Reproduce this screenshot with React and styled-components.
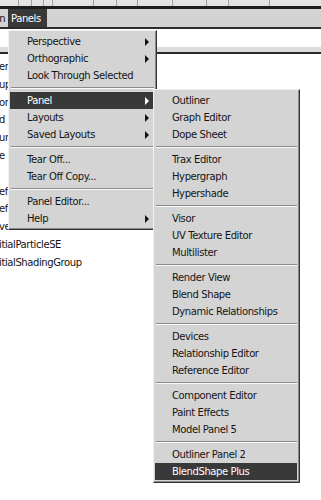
import React from 'react'
import styled, { createGlobalStyle } from 'styled-components'

const GlobalStyle = createGlobalStyle`
  html, body {
    margin: 0;
    padding: 0;
    background: #ffffff;
  }
  body {
    width: 321px;
    height: 500px;
    overflow: hidden;
    font-family: "DejaVu Sans", Verdana, sans-serif;
  }
`

const Screen = styled.div`
  position: relative;
  width: 321px;
  height: 500px;
  overflow: hidden;
  background: #ffffff;
  font-size: 10px;
  letter-spacing: -0.4px;
  color: #141414;
`

const TabStrip = styled.div`
  display: flex;
  height: 6px;
  background: #e4e4e4;
  border-bottom: 3px solid #1e1e1e;
`

const TabCell = styled.div`
  flex: 0 0 ${p => p.w}px;
  border-right: 1px solid #a0a0a0;
`

const MenuBar = styled.div`
  display: flex;
  height: 18px;
  background: #d3d3d3;
  border-bottom: 2px solid #2c2c2c;
`

const BarItem = styled.div`
  display: flex;
  align-items: center;
  justify-content: ${p => (p.clipped ? 'flex-end' : 'flex-start')};
  width: ${p => p.w}px;
  overflow: hidden;
  padding: 0 0 0 ${p => (p.clipped ? 0 : 3)}px;
  box-sizing: border-box;
  white-space: nowrap;
  background: ${p => (p.active ? '#393939' : 'transparent')};
  color: ${p => (p.active ? '#ffffff' : '#141414')};
`

const Outliner = styled.div`
  display: flex;
  flex-direction: column;
`

const HeaderRow = styled.div`
  height: 18px;
  background: #ffffff;
`

const HeaderBand = styled.div`
  height: 5px;
  background: #dcdcdc;
  border-bottom: 2px solid #2a2a2a;
`

const List = styled.div`
  display: flex;
  flex-direction: column;
  padding-top: 4px;
  margin-left: -1px;
`

const ListRow = styled.div`
  height: 17.8px;
  line-height: 17.8px;
  white-space: nowrap;
`

const Menu = styled.div`
  position: absolute;
  left: ${p => p.x}px;
  top: ${p => p.y}px;
  width: ${p => p.w}px;
  box-sizing: border-box;
  padding: 2px 2px 2px 1px;
  background: #d4d4d4;
  border: 1px solid;
  border-color: #f2f2f2 #333333 #333333 #f2f2f2;
  box-shadow: inset -1px -1px 0 #8a8a8a;
  color: #141414;
`

const Item = styled.div`
  display: flex;
  align-items: center;
  justify-content: space-between;
  height: 17px;
  padding: 0 5px 0 17px;
  white-space: nowrap;
  background: ${p => (p.active ? '#393939' : 'transparent')};
  color: ${p => (p.active ? '#ffffff' : 'inherit')};
`

const Arrow = styled.span`
  width: 0;
  height: 0;
  border-top: 4px solid transparent;
  border-bottom: 4px solid transparent;
  border-left: 4px solid currentColor;
`

const Separator = styled.div`
  height: 0;
  margin: 3px 0 3px 1px;
  border-top: 1px solid #8a8a8a;
  border-bottom: 1px solid #fafafa;
`

const tabs = [18, 12, 11, 8, 40, 22, 20, 34, 33, 21, 40]

// left part of the outliner, the rest lies under the menus
const rows = [
  'er',
  'up',
  'or',
  'd',
  'ur',
  'e',
  '',
  'ef',
  'ef',
  've',
  'itialParticleSE',
  'itialShadingGroup',
]

const panelsMenu = [
  [{ label: 'Perspective', sub: true }, { label: 'Orthographic', sub: true }, { label: 'Look Through Selected' }],
  [{ label: 'Panel', sub: true, active: true }, { label: 'Layouts', sub: true }, { label: 'Saved Layouts', sub: true }],
  [{ label: 'Tear Off...' }, { label: 'Tear Off Copy...' }],
  [{ label: 'Panel Editor...' }, { label: 'Help', sub: true }],
]

const panelMenu = [
  [{ label: 'Outliner' }, { label: 'Graph Editor' }, { label: 'Dope Sheet' }],
  [{ label: 'Trax Editor' }, { label: 'Hypergraph' }, { label: 'Hypershade' }],
  [{ label: 'Visor' }, { label: 'UV Texture Editor' }, { label: 'Multilister' }],
  [{ label: 'Render View' }, { label: 'Blend Shape' }, { label: 'Dynamic Relationships' }],
  [{ label: 'Devices' }, { label: 'Relationship Editor' }, { label: 'Reference Editor' }],
  [{ label: 'Component Editor' }, { label: 'Paint Effects' }, { label: 'Model Panel 5' }],
  [{ label: 'Outliner Panel 2' }, { label: 'BlendShape Plus', active: true }],
]

function MenuGroups({ groups }) {
  return groups.map((group, gi) => (
    <React.Fragment key={gi}>
      {gi > 0 && <Separator />}
      {group.map(item => (
        <Item key={item.label} active={item.active}>
          <span>{item.label}</span>
          {item.sub && <Arrow />}
        </Item>
      ))}
    </React.Fragment>
  ))
}

export default function App() {
  return (
    <Screen>
      <GlobalStyle />
      <TabStrip>
        {tabs.map((w, i) => (
          <TabCell key={i} w={w} />
        ))}
      </TabStrip>
      <MenuBar>
        <BarItem w={8} clipped>Skin&nbsp;</BarItem>
        <BarItem w={39} active>Panels</BarItem>
      </MenuBar>
      <Outliner>
        <HeaderRow />
        <HeaderBand />
        <List>
          {rows.map((name, i) => (
            <ListRow key={i}>{name}</ListRow>
          ))}
        </List>
      </Outliner>

      <Menu x={8} y={30} w={149}>
        <MenuGroups groups={panelsMenu} />
      </Menu>
      <Menu x={153} y={89} w={147}>
        <MenuGroups groups={panelMenu} />
      </Menu>
    </Screen>
  )
}
